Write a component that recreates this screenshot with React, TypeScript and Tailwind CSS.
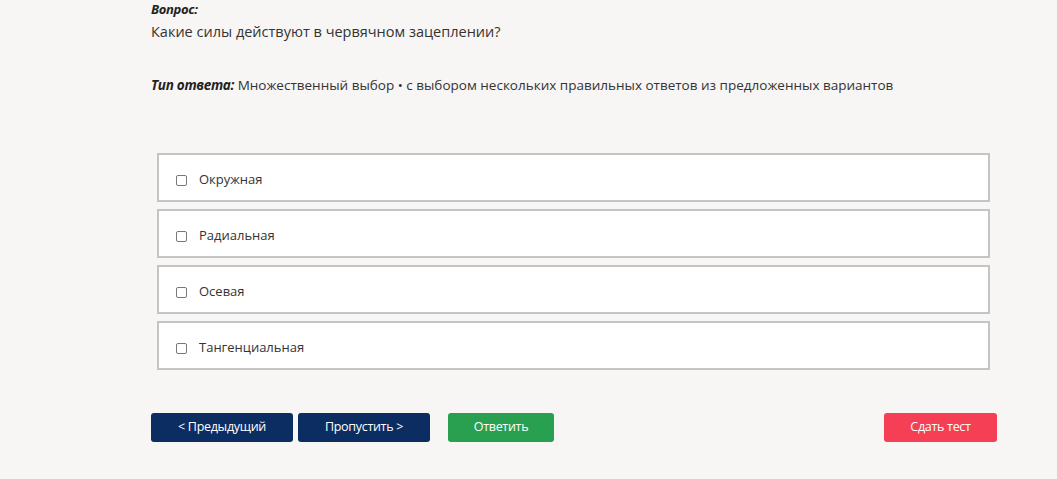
import { useState } from "react";

const options = ["Окружная", "Радиальная", "Осевая", "Тангенциальная"];

export default function App() {
  const [checked, setChecked] = useState<boolean[]>(options.map(() => false));

  function toggle(i: number) {
    setChecked(checked.map((c, idx) => (idx === i ? !c : c)));
  }

  return (
    <div
      className="min-h-[479px] w-full bg-[#f7f6f4] text-[#333]"
      style={{ fontFamily: '"Open Sans", "Noto Sans", sans-serif' }}
    >
      <div className="w-[846px] ml-[151px]">
        <div className="text-[13px] font-bold italic text-[#222] leading-[18px] tracking-[-0.3px]">Вопрос:</div>
        <div className="text-[14.5px] leading-[20px] mt-[4px] text-[#333]">
          Какие силы действуют в червячном зацеплении?
        </div>

        <div className="text-[13.5px] leading-[18px] mt-[34px] text-[#333]">
          <span className="font-bold italic text-[#222] tracking-[-0.3px]">Тип ответа:</span> Множественный выбор • с
          выбором нескольких правильных ответов из предложенных вариантов
        </div>

        <div className="mt-[59px] ml-[6px] w-[833px] flex flex-col gap-[7px]">
          {options.map((opt, i) => (
            <label
              key={opt}
              className="h-[49px] bg-white border-2 border-[#c4c4c4] flex items-center pl-[17px] pt-[5px] cursor-pointer"
            >
              <input
                type="checkbox"
                checked={checked[i]}
                onChange={() => toggle(i)}
                className="w-[11px] h-[11px] m-0 appearance-none border border-[#777] rounded-[2px] bg-white checked:bg-[#0c2d62]"
              />
              <span className="ml-[12px] text-[13px] text-[#333]">{opt}</span>
            </label>
          ))}
        </div>

        <div className="mt-[43px] flex items-center">
          <button className="w-[142px] h-[29px] rounded-[3px] bg-[#0c2d62] text-white text-[12.5px] tracking-[-0.3px]">
            &lt; Предыдущий
          </button>
          <button className="ml-[5px] w-[132px] h-[29px] rounded-[3px] bg-[#0c2d62] text-white text-[12.5px] tracking-[-0.3px]">
            Пропустить &gt;
          </button>
          <button className="ml-[18px] w-[106px] h-[29px] rounded-[3px] bg-[#28a050] text-white text-[12.5px] tracking-[-0.3px]">
            Ответить
          </button>
          <button className="ml-auto w-[113px] h-[29px] rounded-[3px] bg-[#f43f55] text-white text-[12.5px] tracking-[-0.3px]">
            Сдать тест
          </button>
        </div>
      </div>
    </div>
  );
}
